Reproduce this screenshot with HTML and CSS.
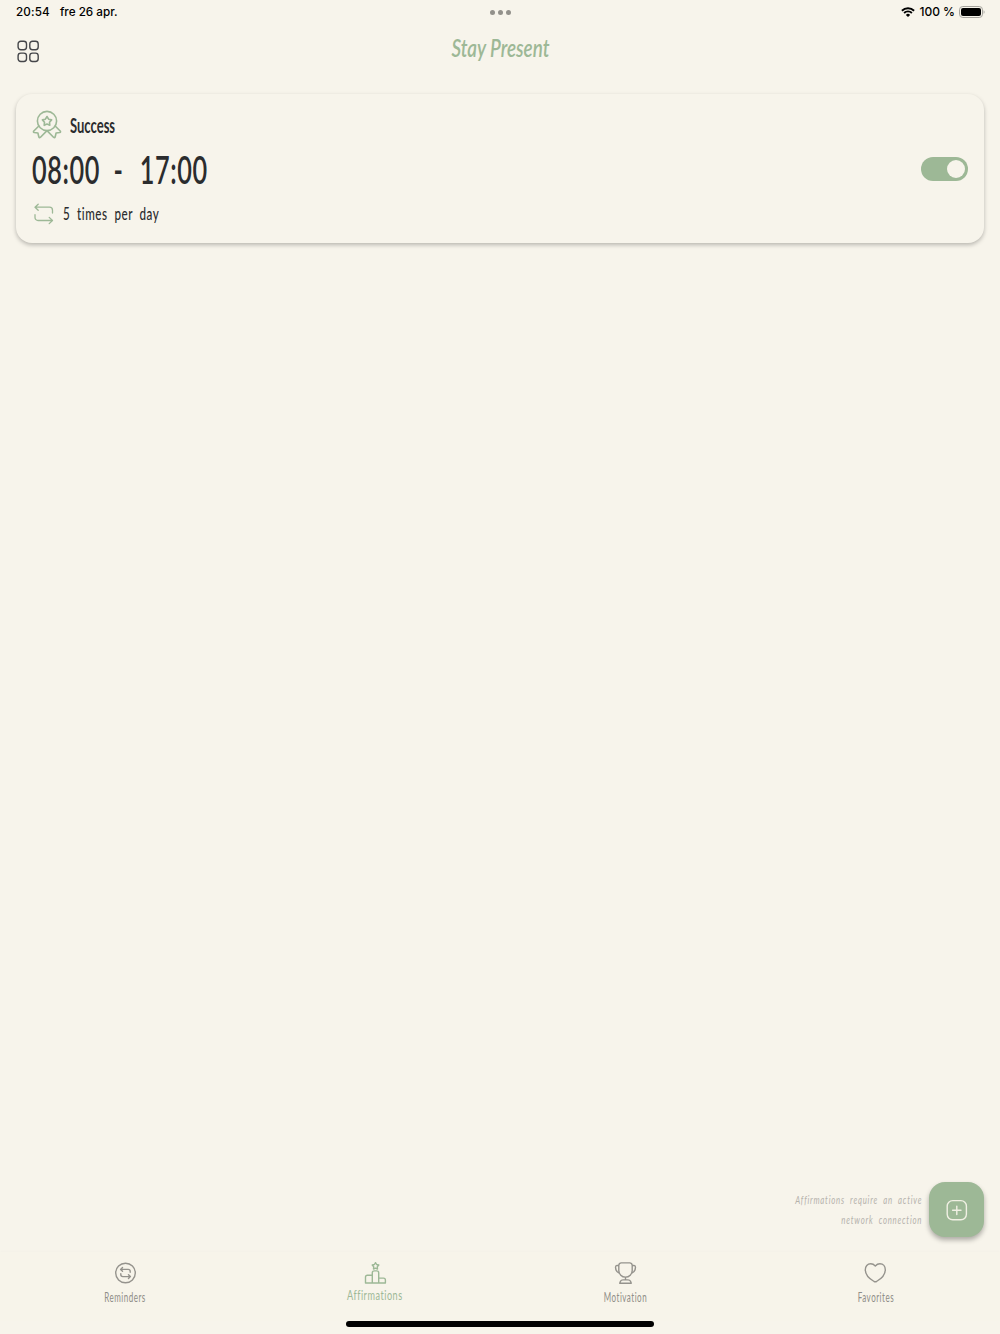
FILE: index.html
```html
<!DOCTYPE html>
<html lang="en">
<head>
  <meta charset="UTF-8">
  <meta name="viewport" content="width=device-width, initial-scale=1.0">
  <title>Stay Present</title>
  <link rel="stylesheet" href="styles.css">
</head>
<body>
  <div class="status-bar">
    <div class="status-left">
      <span class="clock">20:54</span>
      <span class="date">fre 26 apr.</span>
    </div>
    <div class="dots"><i></i><i></i><i></i></div>
    <div class="status-right">
      <svg width="14" height="10" viewBox="0 0 14 10" fill="none" stroke="#000" stroke-width="1.9">
        <path d="M.9 3.7a8.7 8.7 0 0 1 12.2 0M3.1 6a5.6 5.6 0 0 1 7.8 0"/>
        <path d="M7 10 4.9 7.9a3 3 0 0 1 4.2 0z" fill="#000" stroke="none"/>
      </svg>
      <span class="percent">100 %</span>
      <svg width="26" height="12" viewBox="0 0 26 12">
        <rect x=".5" y=".5" width="23" height="11" rx="3.3" fill="none" stroke="#a5a39d"/>
        <rect x="2" y="2" width="20" height="8" rx="2"/>
        <path d="M24.6 4.2c1.3.5 1.3 3.1 0 3.6z" fill="#a5a39d"/>
      </svg>
    </div>
  </div>

  <header>
    <svg class="menu" width="22" height="22" viewBox="0 0 22 22" fill="none" stroke="#45464a" stroke-width="1.4">
      <rect x="1.1" y="1.3" width="8.4" height="8.4" rx="2.7"/>
      <rect x="12.8" y="1.3" width="8.4" height="8.4" rx="2.7"/>
      <rect x="1.1" y="13.1" width="8.4" height="8.4" rx="2.7"/>
      <rect x="12.8" y="13.1" width="8.4" height="8.4" rx="2.7"/>
    </svg>
    <h1><span>Stay Present</span></h1>
  </header>

  <main>
    <div class="card">
      <div class="card-info">
        <div class="card-title">
          <svg width="30" height="30" viewBox="0 0 30 30" fill="none" stroke="#9db896" stroke-width="1.6" stroke-linejoin="round" stroke-linecap="round">
            <circle cx="15" cy="11" r="9.6"/>
            <path d="m15 6.5 1.6 2.7 3 .7-2.1 2.3.3 3.1-2.8-1.2-2.8 1.2.3-3.1-2.1-2.3 3-.7z"/>
            <path d="M6.6 16.2 1.8 21q-.9 1.1.5 1.5l3.6.5.9 3.8q.4 1.6 1.7.4l6.5-6.6 6.5 6.6q1.3 1.2 1.7-.4l.9-3.8 3.6-.5q1.4-.4.5-1.5l-4.8-4.8"/>
          </svg>
          <h2><span>Success</span></h2>
        </div>
        <div class="time"><span>08:00 - <b>17:00</b></span></div>
        <div class="repeat">
          <svg width="20" height="22" viewBox="0 0 20 22" fill="none" stroke="#9db896" stroke-width="1.3" stroke-linecap="round" stroke-linejoin="round">
            <path d="M4.2 1.2 1 4.2l3.2 3M1.2 4.2h14.3a3 3 0 0 1 3 3V10M15.2 14.4l3.3 3.1-3.3 3.1M18.3 17.5H4a3 3 0 0 1-3-3v-2.8"/>
          </svg>
          <span class="repeat-text">5 times per day</span>
        </div>
      </div>
      <div class="toggle"></div>
    </div>
  </main>

  <div class="bottom-row">
    <p class="note"><span>Affirmations require an active<br>network connection</span></p>
    <button class="add">
      <svg width="22" height="22" viewBox="0 0 22 22" fill="none" stroke="#f1f0e4" stroke-width="1.4" stroke-linecap="round">
        <rect x="1.2" y="1.6" width="19.2" height="19.2" rx="5.5"/>
        <path d="M10.8 7.1v8.4M6.6 11.3H15"/>
      </svg>
    </button>
  </div>

  <nav>
    <div class="tab">
      <svg width="22" height="22" viewBox="0 0 22 22" fill="none" stroke="#95938d" stroke-width="1.4" stroke-linecap="round" stroke-linejoin="round">
        <circle cx="11.5" cy="11" r="9.8"/>
        <path d="M8.5 5.6 6.6 7.4l1.9 1.8M6.8 7.4h7.4q2 0 2 2v.8M14.5 12.8l1.9 1.8-1.9 1.8M16.2 14.6H8.8q-2 0-2-2v-.8"/>
      </svg>
      <span class="label reminders">Reminders</span>
    </div>
    <div class="tab active">
      <svg width="22" height="22" viewBox="0 0 22 22" fill="none" stroke="#9db896" stroke-width="1.4" stroke-linejoin="round">
        <path d="m11.5 .7 1.1 1.8 2.2.5-1.5 1.7.2 2.3-2-.9-2 .9.2-2.3L8.2 3l2.2-.5z"/>
        <path d="M8.3 21V10.8q0-1.9 1.9-1.9h2.6q1.9 0 1.9 1.9V21M8.3 13.2H3.4q-1.9 0-1.9 1.9V21h19.9v-3q0-1.9-1.9-1.9h-4.8"/>
      </svg>
      <span class="label affirmations">Affirmations</span>
    </div>
    <div class="tab">
      <svg width="22" height="22" viewBox="0 0 22 22" fill="none" stroke="#95938d" stroke-width="1.4" stroke-linejoin="round" stroke-linecap="round">
        <path d="M4.8 3.2Q5.2.9 7.2.9h8.6q2 0 2.4 2.3v5.2a6.7 6.7 0 0 1-13.4 0zM11.5 15.1v2.8M4.8 3.5H2.9q-1.4 0-1.4 1.8 0 4.2 3.7 5.9M18.2 3.5h1.9q1.4 0 1.4 1.8 0 4.2-3.7 5.9M9 17.9h5q1.9 0 2.5 1.4l.8 1.9H5.7l.8-1.9q.6-1.4 2.5-1.4z"/>
      </svg>
      <span class="label motivation">Motivation</span>
    </div>
    <div class="tab">
      <svg width="22" height="22" viewBox="0 0 22 22" fill="none" stroke="#95938d" stroke-width="1.4" stroke-linejoin="round">
        <path d="M11.3 4C9.9 2.5 8.5 1.8 6.7 1.8 3.4 1.8 1.3 4.3 1.3 7.7c0 6 5.8 10.1 8.8 11.8q1.2.6 2.4 0c3-1.7 8.8-5.8 8.8-11.8 0-3.4-2.1-5.9-5.4-5.9-1.8 0-3.2.7-4.6 2.2z"/>
      </svg>
      <span class="label favorites">Favorites</span>
    </div>
  </nav>
  <div class="home-indicator"></div>
</body>
</html>
```

FILE: styles.css
```css
* {
  box-sizing: border-box;
}

body {
  margin: 0;
  height: 1334px;
  display: flex;
  flex-direction: column;
  background-color: #f7f4eb;
  font-family: Lato, sans-serif;
  color: #2b2c2e;
  overflow: hidden;
}

h1, h2, p {
  margin: 0;
}

svg {
  display: block;
  flex: none;
  overflow: visible;
}

.status-bar {
  height: 24px;
  padding: 0 15px 0 16px;
  display: grid;
  grid-template-columns: 1fr auto 1fr;
  align-items: center;
  font: 500 12px/24px Inter, sans-serif;
  color: #000;
}

.status-left {
  display: flex;
  gap: 10px;
  font-size: 11.7px;
}

.clock {
  letter-spacing: 0.15px;
}

.dots {
  display: flex;
  gap: 3px;
}

.dots i {
  width: 5px;
  height: 5px;
  border-radius: 50%;
  background-color: #93918b;
}

.status-right {
  display: flex;
  justify-content: flex-end;
  align-items: center;
  gap: 4px;
}

header {
  height: 70px;
  padding: 0 17px;
  display: grid;
  grid-template-columns: 22px 1fr 22px;
}

.menu {
  margin-top: 16px;
}

h1 {
  margin-top: 9px;
  display: flex;
  justify-content: center;
  font: italic 600 24px/30px Lato, cursive;
  color: #9db896;
}

/* condensed lettering */
h1 span, h2 span, .time span, .repeat-text, .note span, .label {
  display: inline-block;
  white-space: nowrap;
  transform-origin: left;
}

h1 span {
  transform: scaleX(0.785);
  transform-origin: center;
}

main {
  flex: 1;
  padding: 0 16px;
}

.card {
  height: 149px;
  padding: 16px;
  display: flex;
  align-items: center;
  justify-content: space-between;
  border-radius: 16px;
  background-color: #f7f4eb;
  box-shadow: 0 2px 4px rgba(0, 0, 0, 0.25);
}

.card-info {
  align-self: flex-start;
}

.card-title {
  height: 32px;
  display: flex;
  gap: 8px;
}

h2 {
  font-size: 20.5px;
  line-height: 31px;
  font-weight: 700;
}

h2 span {
  transform: scaleX(0.635);
}

.time {
  height: 56px;
  font-size: 38px;
  line-height: 55px;
  font-weight: 600;
}

.time span {
  letter-spacing: 0.9px;
  word-spacing: 10px;
  transform: scaleX(0.665);
}

.time b {
  margin-left: 4px;
  font-weight: inherit;
}

.repeat {
  height: 32px;
  padding-left: 2px;
  display: flex;
  align-items: center;
  gap: 9px;
}

.repeat-text {
  margin-top: -2px;
  font-size: 17.5px;
  font-weight: 500;
  letter-spacing: 0.8px;
  word-spacing: 5px;
  transform: scaleX(0.665);
}

.toggle {
  width: 47px;
  height: 24px;
  padding: 3px;
  display: flex;
  justify-content: flex-end;
  border-radius: 12px;
  background-color: #9db896;
}

.toggle::after {
  content: "";
  width: 18px;
  height: 18px;
  border-radius: 50%;
  background-color: #f7f4eb;
}

.bottom-row {
  height: 70px;
  padding-right: 16px;
  display: flex;
  justify-content: flex-end;
  gap: 7px;
}

.note {
  margin-top: 8px;
  text-align: right;
  font-size: 12px;
  line-height: 20px;
  font-style: italic;
  color: #b5b2ab;
}

.note span {
  letter-spacing: 1.2px;
  word-spacing: 4px;
  transform: scaleX(0.65);
  transform-origin: right;
}

.add {
  width: 55px;
  height: 55px;
  padding: 0;
  border: none;
  border-radius: 16px;
  display: flex;
  align-items: center;
  justify-content: center;
  background-color: #9db896;
  box-shadow: 0 3px 5px rgba(0, 0, 0, 0.3);
}

nav {
  height: 69px;
  display: grid;
  grid-template-columns: repeat(4, 1fr);
  background-color: #f7f4ea;
  box-shadow: 0 -1px 3px rgba(0, 0, 0, 0.015);
}

.tab {
  padding-top: 10px;
  display: flex;
  flex-direction: column;
  align-items: center;
  color: #8f8d87;
}

.label {
  margin-top: 5px;
  font-size: 12.5px;
  line-height: 18px;
  letter-spacing: 0.8px;
  transform: translateX(0.5px) scaleX(0.64);
  transform-origin: center;
}

.active .label {
  margin-top: 2px;
  font-size: 14px;
  transform: scaleX(0.65);
  color: #9db896;
}

.home-indicator {
  width: 308px;
  height: 6px;
  margin: 0 auto 7px;
  border-radius: 3px;
  background-color: #000;
}
```
